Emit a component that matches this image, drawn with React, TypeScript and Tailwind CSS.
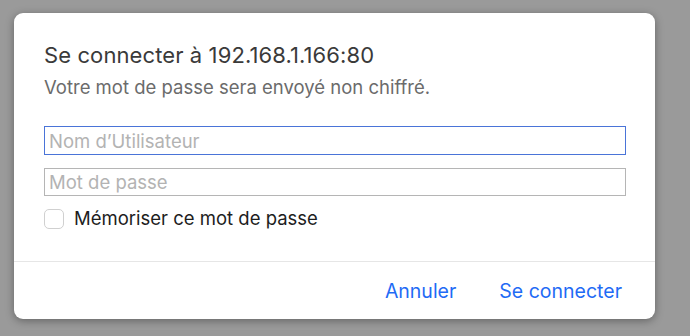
export default function App() {
  return (
    <div className="h-[336px] w-[690px] bg-[#9a9a9a] pl-[14px] pt-[13px] font-['Inter',sans-serif]">
      <div className="flex h-[306px] w-[641px] flex-col rounded-[9px] bg-white shadow-[0_2px_8px_rgba(0,0,0,0.35)]">
        <div className="flex-1 px-[30px] pt-[29px]">
          <h1 className="text-[22px] leading-[26px] tracking-[0.1px] text-[#3a3a3a]">
            Se connecter à 192.168.1.166:80
          </h1>
          <p className="mt-[8px] text-[18.5px] leading-[22px] text-[#6b6b6b]">
            Votre mot de passe sera envoyé non chiffré.
          </p>
          <input
            type="text"
            placeholder="Nom d’Utilisateur"
            className="mt-[28px] block h-[29px] w-[582px] border border-[#4a74d8] px-[4px] text-[18.5px] text-[#333] outline-none placeholder:text-[#b3b3b3]"
          />
          <input
            type="password"
            placeholder="Mot de passe"
            className="mt-[13px] block h-[28px] w-[582px] border border-[#b5b5b5] px-[4px] text-[18.5px] text-[#333] outline-none placeholder:text-[#b3b3b3]"
          />
          <label className="mt-[13px] flex h-[20px] items-center gap-[10px] text-[18.5px] text-[#1d1d1d]">
            <span className="h-[20px] w-[20px] rounded-[5px] border border-[#d0d0d0] bg-white" />
            Mémoriser ce mot de passe
          </label>
        </div>
        <div className="flex h-[58px] items-center justify-end gap-[43px] border-t border-[#e6e6e6] pr-[33px] text-[19.5px] leading-[24px] text-[#1f6bf5]">
          <button type="button">Annuler</button>
          <button type="button">Se connecter</button>
        </div>
      </div>
    </div>
  );
}
